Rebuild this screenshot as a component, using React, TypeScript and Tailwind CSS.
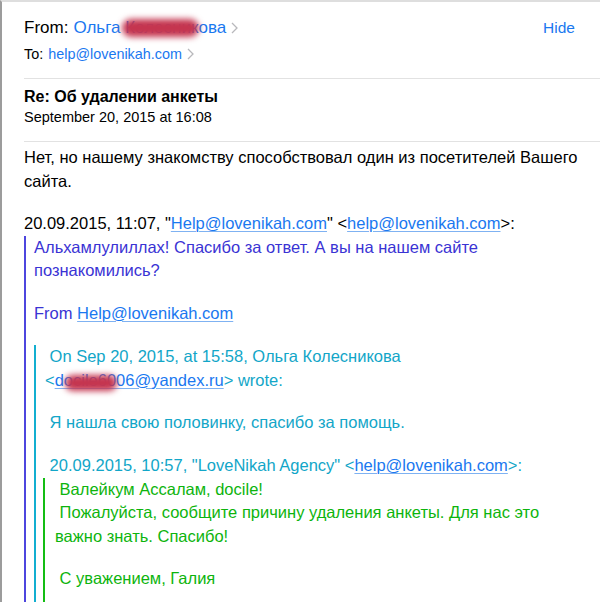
import type { ReactNode } from 'react'

const FONT = { fontFamily: '"Liberation Sans", Arial, sans-serif' }

function Link({ children }: { children: ReactNode }) {
  return (
    <span className="text-[#1a78f0] underline decoration-[#7fb2f2] decoration-1 underline-offset-2">
      {children}
    </span>
  )
}

function Chevron() {
  return (
    <svg width="7" height="12" viewBox="0 0 7 12" className="ml-[5px] inline-block">
      <path d="M1 1l5 5-5 5" fill="none" stroke="#b8b8bc" strokeWidth="1.3" />
    </svg>
  )
}

function Smudge({ className }: { className: string }) {
  return (
    <span
      aria-hidden
      className={`pointer-events-none absolute rounded-full bg-[#c5354f] blur-[3px] ${className}`}
    />
  )
}

export default function App() {
  return (
    <div
      style={FONT}
      className="h-[602px] w-[600px] overflow-hidden border-l-2 border-t-2 border-l-[#9c9c9c] border-t-[#dedede] bg-white text-black"
    >
      {/* header */}
      <div className="flex items-start justify-between pl-[22px] pr-[25px] pt-[15px]">
        <div>
          <div className="relative flex items-center text-[17px] leading-[22px]">
            <span>From:</span>
            <span className="ml-[5px] text-[#1a78f0]">Ольга Колесникова</span>
            <Chevron />
            <Smudge className="left-[98px] top-[2px] h-[18px] w-[77px]" />
          </div>
          <div className="mt-[5px] flex items-center text-[14.4px] leading-[20px]">
            <span>To:</span>
            <span className="ml-[5px] text-[#1a78f0]">help@lovenikah.com</span>
            <Chevron />
          </div>
        </div>
        <span className="text-[15.5px] leading-[22px] text-[#1a78f0]">Hide</span>
      </div>

      <div className="ml-[22px] mt-[14px] border-t border-[#e2e2e2]" />

      <div className="pl-[22px] pt-[7px]">
        <div className="text-[16px] font-bold leading-[22px]">Re: Об удалении анкеты</div>
        <div className="text-[14.5px] leading-[18px]">September 20, 2015 at 16:08</div>
      </div>

      <div className="ml-[22px] mt-[15px] border-t border-[#e2e2e2]" />

      {/* body */}
      <div className="pl-[22px] pr-[20px] pt-[4px] text-[16.5px] leading-[23.5px]">
        <p>Нет, но нашему знакомству способствовал один из посетителей Вашего сайта.</p>

        <p className="mt-[19px]">
          20.09.2015, 11:07, "<Link>Help@lovenikah.com</Link>" &lt;<Link>help@lovenikah.com</Link>&gt;:
        </p>

        <div className="border-l-2 border-[#4d46de] pl-[8px] text-[#3a33d4]">
          <p>Альхамлулиллах! Спасибо за ответ. А вы на нашем сайте познакомились?</p>
          <p className="mt-[19px]">
            From <Link>Help@lovenikah.com</Link>
          </p>

          <div className="mt-[20px] border-l-2 border-[#13afd0] pl-[9px] text-[#12a6c8]">
            <p>
              {'\u00a0'}On Sep 20, 2015, at 15:58, Ольга Колесникова{' '}
              <span className="relative">
                &lt;<Link>docile6006@yandex.ru</Link>&gt;
                <Smudge className="left-[20px] top-[4px] h-[16px] w-[52px]" />
              </span>{' '}
              wrote:
            </p>
            <p className="mt-[19px]">{'\u00a0'}Я нашла свою половинку, спасибо за помощь.</p>
            <p className="mt-[19.5px]">
              {'\u00a0'}20.09.2015, 10:57, "LoveNikah Agency" &lt;<Link>help@lovenikah.com</Link>&gt;:
            </p>

            <div className="ml-[-2px] border-l-2 border-[#14bd14] pl-[10px] text-[#0db40d]">
              <p>{'\u00a0'}Валейкум Ассалам, docile!</p>
              <p>{'\u00a0'}Пожалуйста, сообщите причину удаления анкеты. Для нас это важно знать. Спасибо!</p>
              <p className="mt-[19px]">{'\u00a0'}С уважением, Галия</p>
              <div className="h-[40px]" />
            </div>
          </div>
        </div>
      </div>
    </div>
  )
}
